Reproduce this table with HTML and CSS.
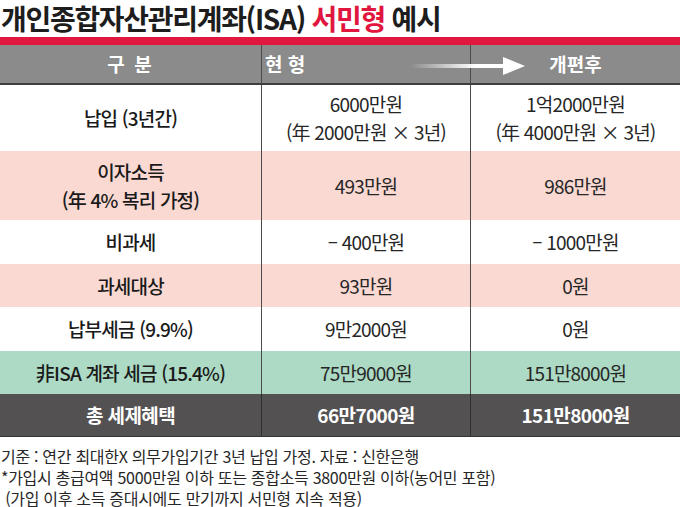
FILE: index.html
```html
<!DOCTYPE html>
<html lang="ko">
<head>
<meta charset="utf-8">
<link rel="stylesheet" href="styles.css">
</head>
<body>
<div class="page">
  <h1 class="title">개인종합자산관리계좌(ISA) <span class="red">서민형</span> 예시</h1>
  <div class="table">
    <div class="row head">
      <div class="cell label">구 분</div>
      <div class="cell cur">현 형</div>
      <div class="cell">개편후</div>
      <div class="arrow"><span class="shaft"></span><span class="tip"></span></div>
    </div>
    <div class="row white r1">
      <div class="cell label">납입 (3년간)</div>
      <div class="cell">6000만원<br>(年 2000만원 × 3년)</div>
      <div class="cell">1억2000만원<br>(年 4000만원 × 3년)</div>
    </div>
    <div class="row pink r2">
      <div class="cell label">이자소득<br>(年 4% 복리 가정)</div>
      <div class="cell">493만원</div>
      <div class="cell">986만원</div>
    </div>
    <div class="row white">
      <div class="cell label">비과세</div>
      <div class="cell">– 400만원</div>
      <div class="cell">– 1000만원</div>
    </div>
    <div class="row pink">
      <div class="cell label">과세대상</div>
      <div class="cell">93만원</div>
      <div class="cell">0원</div>
    </div>
    <div class="row white">
      <div class="cell label">납부세금 (9.9%)</div>
      <div class="cell">9만2000원</div>
      <div class="cell">0원</div>
    </div>
    <div class="row green">
      <div class="cell label">非ISA 계좌 세금 (15.4%)</div>
      <div class="cell">75만9000원</div>
      <div class="cell">151만8000원</div>
    </div>
    <div class="row total">
      <div class="cell label">총 세제혜택</div>
      <div class="cell">66만7000원</div>
      <div class="cell">151만8000원</div>
    </div>
  </div>
  <div class="notes">
    <p>기준 : 연간 최대한X 의무가입기간 3년 납입 가정. 자료 : 신한은행</p>
    <p>*가입시 총급여액 5000만원 이하 또는 종합소득 3800만원 이하(농어민 포함)</p>
    <p>&nbsp;(가입 이후 소득 증대시에도 만기까지 서민형 지속 적용)</p>
  </div>
</div>
</body>
</html>
```
FILE: styles.css
```css
* { box-sizing: border-box; }
html, body { margin: 0; padding: 0; background: #ffffff; }
body {
  width: 680px;
  height: 507px;
  overflow: hidden;
  font-family: "Noto Sans CJK KR", "Noto Sans", sans-serif;
  color: #1e1e1e;
}
.page { display: flex; flex-direction: column; }
.title {
  margin: 0;
  height: 37px;
  padding-left: 1px;
  font-size: 28px;
  line-height: 36px;
  font-weight: 700;
  letter-spacing: -1.3px;
  color: #1d1d1d;
  white-space: nowrap;
}
.red { color: #e0163e; }
.table {
  border-top: 8px solid #e1173f;
  display: flex;
  flex-direction: column;
}
.row {
  display: grid;
  grid-template-columns: 261px 209px 210px;
  position: relative;
}
.cell {
  display: flex;
  align-items: center;
  justify-content: center;
  text-align: center;
  font-size: 19px;
  line-height: 28px;
  letter-spacing: -0.8px;
  color: #262626;
}
.cell + .cell { border-left: 1.5px solid #4a4a4a; }
.label { font-weight: 500; color: #1a1a1a; }
.head {
  height: 40px;
  background: #8b8b8b;
  border-bottom: 2px solid #3e3e3e;
}
.head .cell {
  color: #ffffff;
  font-weight: 700;
  font-size: 19px;
  letter-spacing: 0;
}
.head .cur { justify-content: flex-start; padding-left: 3px; }
.head .label { letter-spacing: 2px; }
.arrow {
  position: absolute;
  left: 410px;
  top: 12px;
  width: 115px;
  height: 18px;
  display: flex;
  align-items: center;
}
.shaft {
  flex: 1;
  height: 4px;
  background: linear-gradient(to right, rgba(255,255,255,0), #ffffff 70%);
}
.tip {
  width: 0;
  height: 0;
  border-top: 9px solid transparent;
  border-bottom: 9px solid transparent;
  border-left: 22px solid #ffffff;
}
.white { background: #ffffff; height: 44px; }
.pink { background: #fad9d2; height: 43px; }
.green { background: #acdac4; height: 43px; }
.r1 { height: 66px; }
.r2 { height: 69px; }
.total {
  background: #545153;
  height: 43px;
  border-bottom: 1px solid #333;
}
.total .cell { color: #ffffff; font-weight: 700; letter-spacing: -0.6px; }
.total .cell + .cell { border-left-color: #2f2f2f; }
.notes {
  padding-top: 9px;
  padding-left: 1px;
}
.notes p {
  margin: 0;
  font-size: 16px;
  line-height: 21px;
  letter-spacing: -0.3px;
  color: #262626;
  white-space: nowrap;
}
```
